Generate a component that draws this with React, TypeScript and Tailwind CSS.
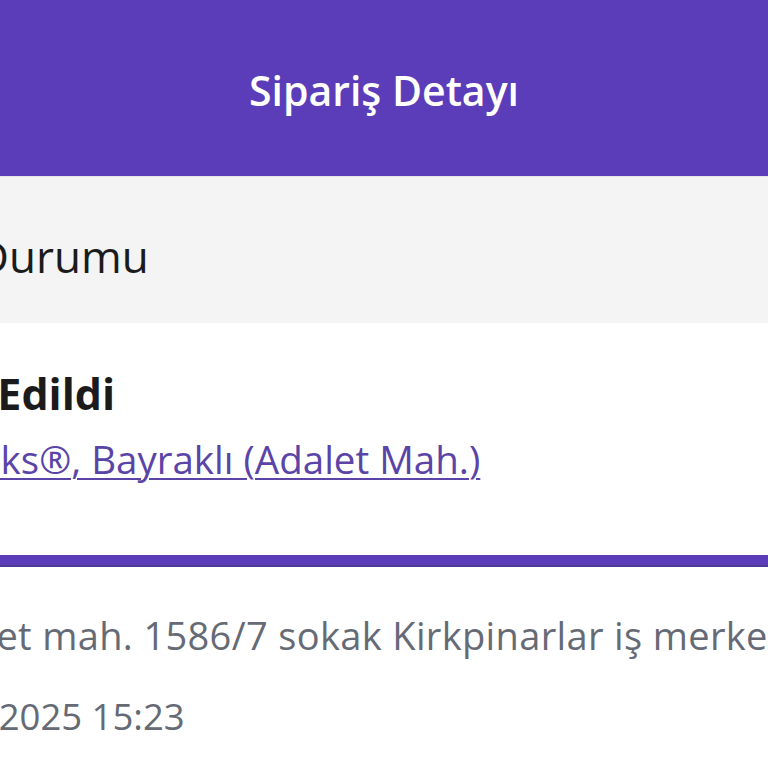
const font = { fontFamily: '"Open Sans", "Noto Sans", sans-serif' };

const App = (): any => {
  return (
    <div className="w-[768px] h-[768px] overflow-hidden bg-white" style={font}>
      <div className="h-[176px] bg-[#5b3cb9] flex items-center justify-center pt-[4px]">
        <h1 className="text-white text-[41px] font-semibold leading-none">Sipariş Detayı</h1>
      </div>

      <div className="h-[147px] bg-[#f4f4f4] flex items-center border-t border-[#e6e6e6] pt-[12px]">
        <div className="ml-[-171px] whitespace-nowrap text-[44px] text-[#1b1b1b] leading-none">
          Sipariş Durumu
        </div>
      </div>

      <div className="h-[232px] bg-white flex flex-col pt-[49px]">
        <div className="ml-[-154px] whitespace-nowrap text-[43px] font-bold text-[#1b1b1b] leading-none">
          Teslim Edildi
        </div>
        <a
          href="#"
          className="ml-[-137px] mt-[25px] whitespace-nowrap text-[38.5px] text-[#5a44a8] underline underline-offset-4 decoration-2 leading-none"
        >
          Starbucks®, Bayraklı (Adalet Mah.)
        </a>
      </div>

      <div className="h-[12px] bg-[#5b3cb9] border-b-2 border-[#4d3a94]"></div>

      <div className="flex flex-col pt-[45px]">
        <div className="ml-[-83px] whitespace-nowrap text-[38px] tracking-[0.35px] text-[#656a75] leading-tight">
          Adalet mah. 1586/7 sokak Kirkpinarlar iş merkezi
        </div>
        <div className="ml-[-104px] mt-[34px] whitespace-nowrap text-[36.5px] text-[#656a75] leading-tight">
          12.03.2025 15:23
        </div>
      </div>
    </div>
  );
};

export default App;
